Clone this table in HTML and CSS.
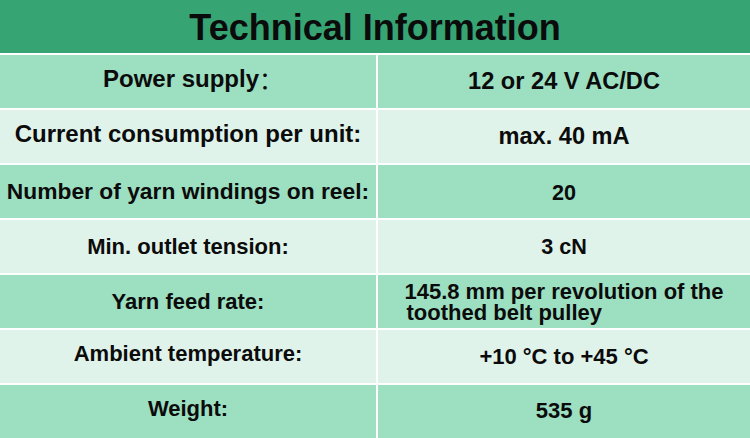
FILE: index.html
```html
<!DOCTYPE html>
<html lang="en">
<head>
<meta charset="utf-8">
<title>Technical Information</title>
<link rel="stylesheet" href="styles.css">
</head>
<body>
<div class="sheet">
  <div class="title">Technical Information</div>
  <div class="table">
    <div class="cell dark label up">Power supply<span class="cjk">：</span></div>
    <div class="cell dark value">12 or 24 V AC/DC</div>

    <div class="cell light label up">Current consumption per unit:</div>
    <div class="cell light value">max. 40 mA</div>

    <div class="cell dark label s23">Number of yarn windings on reel:</div>
    <div class="cell dark value s21 down">20</div>

    <div class="cell light label s22">Min. outlet tension:</div>
    <div class="cell light value s21">3 cN</div>

    <div class="cell dark label s22">Yarn feed rate:</div>
    <div class="cell dark value s22">
      <div class="multi">
        <span class="line">145.8 mm per revolution of the</span>
        <span class="line indent">toothed belt pulley</span>
      </div>
    </div>

    <div class="cell light label s22 up">Ambient temperature:</div>
    <div class="cell light value s22">+10 °C to +45 °C</div>

    <div class="cell dark label s22 up">Weight:</div>
    <div class="cell dark value s22 up-small">535 g</div>
  </div>
</div>
</body>
</html>
```

FILE: styles.css
```css
html, body {
  margin: 0;
  padding: 0;
  background: #ffffff;
}

body {
  font-family: "Liberation Sans", Arial, sans-serif;
  font-weight: bold;
  color: #0b0b0b;
}

.sheet {
  width: 750px;
  height: 438px;
  display: flex;
  flex-direction: column;
  gap: 2px;
  background: #ffffff;
}

.title {
  height: 53px;
  background: #36a573;
  display: flex;
  align-items: center;
  justify-content: center;
  font-size: 36px;
  line-height: 1;
  padding-top: 2px;
  box-sizing: border-box;
}

.table {
  display: grid;
  grid-template-columns: 376px 1fr;
  grid-auto-rows: 53px;
  gap: 2px;
}

.cell {
  display: flex;
  align-items: center;
  justify-content: center;
  font-size: 24px;
  line-height: 1;
  text-align: center;
  white-space: nowrap;
  box-sizing: border-box;
}

.dark { background: #9ddfc1; }
.light { background: #e0f3ea; }

.value { font-size: 23.6px; }

.s23 { font-size: 22.8px; }
.s22 { font-size: 22px; }
.s21 { font-size: 21.6px; }

.up { padding-bottom: 6px; }
.up-small { padding-bottom: 2px; }
.down { padding-top: 2px; }

.cjk {
  font-family: "Noto Sans CJK SC", sans-serif;
  font-weight: normal;
  display: inline-block;
  width: 14px;
  text-align: left;
}

.multi {
  display: flex;
  flex-direction: column;
  align-items: flex-start;
  line-height: 21px;
}

.indent { padding-left: 2px; }
```
